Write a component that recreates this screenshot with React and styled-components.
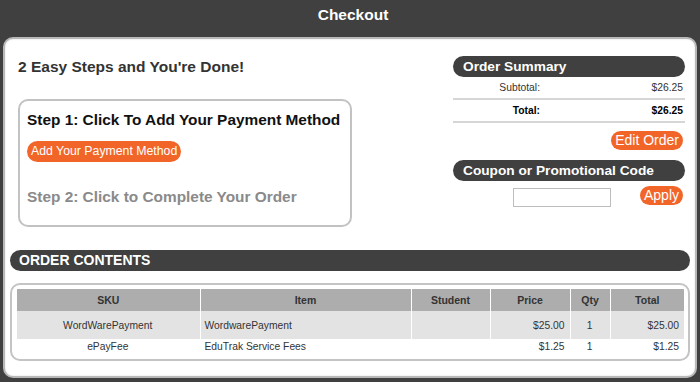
import React from "react";
import styled, { createGlobalStyle } from "styled-components";

const Global = createGlobalStyle`
  html, body { margin: 0; padding: 0; background: #404040; }
  body { font-family: "Liberation Sans", Arial, sans-serif; }
  * { box-sizing: border-box; }
`;

const Page = styled.div`
  width: 700px;
  height: 382px;
  background: #404040;
  padding: 0 3px;
  overflow: hidden;
`;

const Title = styled.h1`
  margin: 0;
  height: 37px;
  padding: 5px 0 0 6px;
  line-height: 20px;
  text-align: center;
  color: #fff;
  font-size: 15.5px;
  font-weight: bold;
`;

const Panel = styled.div`
  height: 341px;
  background: #fff;
  border: 2px solid #b8b8b8;
  border-radius: 10px;
  box-shadow: inset 0 0 2px rgba(0,0,0,0.15);
  padding: 17px 5px 0 5px;
`;

const Top = styled.div`
  display: flex;
  justify-content: space-between;
  padding: 0 5px 0 8px;
`;

const LeftCol = styled.div`
  width: 334px;
  padding-top: 2px;
`;

const Heading = styled.h2`
  margin: 0 0 23px 0;
  font-size: 15.5px;
  line-height: 18px;
  color: #333;
  font-weight: bold;
`;

const StepBox = styled.div`
  width: 334px;
  height: 128px;
  border: 2px solid #c2c2c2;
  border-radius: 10px;
  padding: 9px 7px 0 7px;
`;

const Step = styled.div`
  font-size: 15.4px;
  line-height: 20px;
  font-weight: bold;
  white-space: nowrap;
  color: ${p => (p.$muted ? "#8a8a8a" : "#111")};
`;

const OrangeButton = styled.button`
  display: inline-block;
  border: none;
  background: #f26528;
  color: #fff;
  font-family: "Liberation Sans", Arial, sans-serif;
  font-size: ${p => p.$size || 13}px;
  height: ${p => p.$h || 21}px;
  line-height: ${p => p.$h || 21}px;
  padding: 0 ${p => p.$pad || 5}px;
  border-radius: 11px;
  cursor: pointer;
`;

const StepButtonRow = styled.div`
  margin: 11px 0 25px;
  height: 21px;
`;

const RightCol = styled.div`
  width: 232px;
`;

const Bar = styled.div`
  height: 21px;
  line-height: 21px;
  background: #404040;
  color: #fff;
  font-weight: bold;
  font-size: ${p => p.$size || 13.7}px;
  border-radius: 11px;
  padding-left: ${p => p.$pl || 10}px;
  text-transform: ${p => (p.$upper ? "uppercase" : "none")};
`;

const SumRow = styled.div`
  display: grid;
  grid-template-columns: 87px 1fr;
  height: 23px;
  align-items: center;
  font-size: 10.3px;
  color: ${p => (p.$bold ? "#000" : "#333")};
  font-weight: ${p => (p.$bold ? "bold" : "normal")};
  border-bottom: 2px solid #d6d6d6;
  padding-right: 2px;
  span { text-align: right; }
`;

const RightAction = styled.div`
  display: flex;
  justify-content: flex-end;
  padding-right: 2px;
  margin: ${p => p.$m || "0"};
`;

const CouponRow = styled.div`
  display: flex;
  align-items: flex-start;
  padding: 5px 2px 0 60px;
  justify-content: space-between;
`;

const CouponInput = styled.input`
  width: 98px;
  height: 19px;
  border: 1px solid #bdbdbd;
  margin-top: 2px;
  padding: 0 3px;
`;

const Contents = styled.div`
  margin-top: 23px;
`;

const TableBox = styled.div`
  margin-top: 12px;
  height: 78px;
  border: 2px solid #c4c4c4;
  border-radius: 10px;
  padding: 4px 4px 0 5px;
`;

const Table = styled.table`
  width: 667px;
  border-collapse: collapse;
  table-layout: fixed;
  font-size: 10.3px;
  color: #333;
`;

const Th = styled.th`
  background: #adadad;
  height: 22px;
  font-size: 10.5px;
  font-weight: bold;
  text-align: center;
  border-left: 1px solid #fff;
  &:first-child { border-left: none; }
  padding: 0;
`;

const Tr = styled.tr`
  background: ${p => (p.$shade ? "#e3e3e3" : "#fff")};
  height: ${p => p.$h}px;
`;

const Td = styled.td`
  text-align: ${p => p.$align || "left"};
  padding: 0 5px 0 4px;
  border-left: 1px solid #fff;
  &:first-child { border-left: none; }
`;

const cols = [183, 211, 79, 80, 40, 74];

const rows = [
  { sku: "WordWarePayment", item: "WordwarePayment", student: "", price: "$25.00", qty: "1", total: "$25.00", shade: true, h: 28 },
  { sku: "ePayFee", item: "EduTrak Service Fees", student: "", price: "$1.25", qty: "1", total: "$1.25", shade: false, h: 14 },
];

export default function App() {
  return (
    <>
      <Global />
      <Page>
        <Title>Checkout</Title>
        <Panel>
          <Top>
            <LeftCol>
              <Heading>2 Easy Steps and You're Done!</Heading>
              <StepBox>
                <Step>Step 1: Click To Add Your Payment Method</Step>
                <StepButtonRow>
                  <OrangeButton $size={12.3} $pad={4}>Add Your Payment Method</OrangeButton>
                </StepButtonRow>
                <Step $muted>Step 2: Click to Complete Your Order</Step>
              </StepBox>
            </LeftCol>
            <RightCol>
              <Bar>Order Summary</Bar>
              <SumRow>
                <span>Subtotal:</span>
                <span>$26.25</span>
              </SumRow>
              <SumRow $bold>
                <span>Total:</span>
                <span>$26.25</span>
              </SumRow>
              <RightAction $m="8px 0 10px">
                <OrangeButton $size={14} $h={19} $pad={4}>Edit Order</OrangeButton>
              </RightAction>
              <Bar>Coupon or Promotional Code</Bar>
              <CouponRow>
                <CouponInput type="text" />
                <OrangeButton $size={14} $h={19} $pad={4}>Apply</OrangeButton>
              </CouponRow>
            </RightCol>
          </Top>
          <Contents>
            <Bar $size={14} $pl={9} $upper>Order Contents</Bar>
            <TableBox>
              <Table>
                <colgroup>
                  {cols.map((w, i) => (
                    <col key={i} style={{ width: w }} />
                  ))}
                </colgroup>
                <thead>
                  <tr>
                    <Th>SKU</Th>
                    <Th>Item</Th>
                    <Th>Student</Th>
                    <Th>Price</Th>
                    <Th>Qty</Th>
                    <Th>Total</Th>
                  </tr>
                </thead>
                <tbody>
                  {rows.map((r, i) => (
                    <Tr key={i} $shade={r.shade} $h={r.h}>
                      <Td $align="center">{r.sku}</Td>
                      <Td>{r.item}</Td>
                      <Td>{r.student}</Td>
                      <Td $align="right">{r.price}</Td>
                      <Td $align="center">{r.qty}</Td>
                      <Td $align="right">{r.total}</Td>
                    </Tr>
                  ))}
                </tbody>
              </Table>
            </TableBox>
          </Contents>
        </Panel>
      </Page>
    </>
  );
}
